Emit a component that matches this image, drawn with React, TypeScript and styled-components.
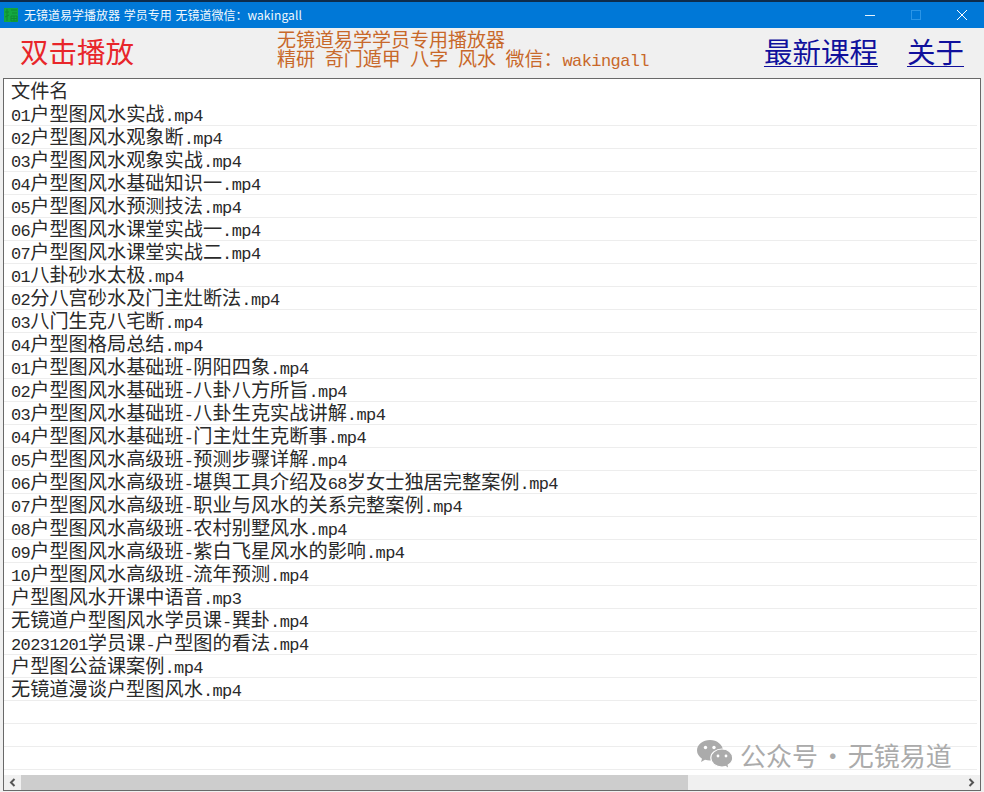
import React from "react";
import styled, { createGlobalStyle } from "styled-components";

const Global = createGlobalStyle`
  html, body { margin: 0; padding: 0; height: 792px; overflow: hidden; background: #f0f0f0; }
  #root { height: 792px; }
`;

const Win = styled.div`
  position: relative;
  width: 984px;
  height: 792px;
  display: flex;
  flex-direction: column;
  padding-bottom: 1px;
  box-sizing: border-box;
  background: #f0f0f0;
  font-family: "Liberation Mono", "Noto Sans CJK SC", monospace;
`;

const TitleBar = styled.div`
  height: 26px;
  flex: none;
  display: flex;
  align-items: center;
  background: #0078d7;
  border-top: 2px solid #0d2c4c;
  color: #f2f8fd;
  font: 12px/26px "Noto Sans CJK SC", "Noto Sans", sans-serif;
  padding-left: 4px;
`;

const AppIcon = styled.svg`
  width: 14px;
  height: 14px;
  flex: none;
  margin-right: 6px;
`;

const TitleText = styled.span`
  flex: 1;
  white-space: pre;
  word-spacing: 1px;
`;

const TitleLatin = styled.span`
  letter-spacing: 0.1px;
`;

const WinControl = styled.svg`
  width: 46px;
  height: 12px;
  flex: none;
`;

const Controls = styled.div`
  display: flex;
  margin-right: -1px;
  align-items: center;
`;

const Toolbar = styled.div`
  height: 50px;
  flex: none;
  display: flex;
  align-items: center;
  padding: 0 20px;
`;

const PlayLabel = styled.div`
  width: 257px;
  flex: none;
  font: 28.5px/34px "Noto Sans CJK SC", sans-serif;
  color: #e8262a;
  margin-top: -4px;
`;

const Slogan = styled.div`
  flex: 1;
  font: 19px/19px "Noto Sans CJK SC", sans-serif;
  color: #c8682a;
  white-space: pre;
  margin-top: -10px;
`;

const SloganLine = styled.div`
  height: 19px;
`;

const LinkBox = styled.a<{ $gap: number }>`
  font: 28.5px/34px "Noto Sans CJK SC", sans-serif;
  color: #10109c;
  text-decoration: underline;
  text-decoration-thickness: 1px;
  text-underline-offset: 3px;
  margin-left: ${(p) => p.$gap}px;
  margin-top: -5px;
  white-space: nowrap;
`;

const ListFrame = styled.div`
  flex: 1;
  min-height: 0;
  margin: 0 3px;
  display: flex;
  flex-direction: column;
  background: #fff;
  border: 1px solid #696969;
`;

const Rows = styled.div`
  flex: 1;
  min-height: 0;
`;

const HeaderRow = styled.div`
  height: 24px;
  padding-left: 7px;
  font: 19.2px/23px "Noto Sans CJK SC", sans-serif;
  color: #2a2a2a;
`;

const Row = styled.div`
  height: 23px;
  box-sizing: border-box;
  padding-left: 7px;
  margin-right: 3px;
  border-bottom: 1px solid #ededed;
  font: 19.2px/20px "Noto Sans CJK SC", sans-serif;
  color: #2a2a2a;
  white-space: nowrap;
`;

const Latin = styled.span`
  font-family: "Liberation Mono", monospace;
  font-size: 17px;
  letter-spacing: -0.6px;
`;

const HBar = styled.div`
  height: 15px;
  flex: none;
  display: flex;
  background: #f0f0f0;
`;

const ArrowBtn = styled.div`
  width: 17px;
  flex: none;
  display: flex;
  align-items: center;
  justify-content: center;
`;

const Thumb = styled.div`
  width: 667px;
  flex: none;
  background: #cdcdcd;
`;

const Track = styled.div`
  flex: 1;
`;

const Watermark = styled.div`
  position: absolute;
  left: 697px;
  top: 740px;
  display: flex;
  align-items: center;
  color: #ababab;
  font: 26px/28px "Noto Sans CJK SC", sans-serif;
  white-space: pre;
  word-spacing: -4px;
  height: 29px;
`;

const WmIcon = styled.svg`
  width: 36px;
  height: 29px;
  margin-right: 7px;
  flex: none;
`;

function Mixed({ text }: { text: string }) {
  const parts = text.split(/([\x20-\x7e]+)/).filter(Boolean);
  return (
    <>
      {parts.map((p, i) =>
        /^[\x20-\x7e]+$/.test(p) ? <Latin key={i}>{p}</Latin> : <React.Fragment key={i}>{p}</React.Fragment>
      )}
    </>
  );
}

const files = [
  "01户型图风水实战.mp4",
  "02户型图风水观象断.mp4",
  "03户型图风水观象实战.mp4",
  "04户型图风水基础知识一.mp4",
  "05户型图风水预测技法.mp4",
  "06户型图风水课堂实战一.mp4",
  "07户型图风水课堂实战二.mp4",
  "01八卦砂水太极.mp4",
  "02分八宫砂水及门主灶断法.mp4",
  "03八门生克八宅断.mp4",
  "04户型图格局总结.mp4",
  "01户型图风水基础班-阴阳四象.mp4",
  "02户型图风水基础班-八卦八方所旨.mp4",
  "03户型图风水基础班-八卦生克实战讲解.mp4",
  "04户型图风水基础班-门主灶生克断事.mp4",
  "05户型图风水高级班-预测步骤详解.mp4",
  "06户型图风水高级班-堪舆工具介绍及68岁女士独居完整案例.mp4",
  "07户型图风水高级班-职业与风水的关系完整案例.mp4",
  "08户型图风水高级班-农村别墅风水.mp4",
  "09户型图风水高级班-紫白飞星风水的影响.mp4",
  "10户型图风水高级班-流年预测.mp4",
  "户型图风水开课中语音.mp3",
  "无镜道户型图风水学员课-巽卦.mp4",
  "20231201学员课-户型图的看法.mp4",
  "户型图公益课案例.mp4",
  "无镜道漫谈户型图风水.mp4",
  "",
  "",
  "",
];

export default function App() {
  return (
    <Win>
      <Global />
      <TitleBar>
        <AppIcon viewBox="0 0 14 14">
          <rect width="14" height="14" fill="#14a83f" />
          <path d="M3 1v12M1 4h4M1 9l4-2M7 2h6M8 5h5M7 8h6v5H7zM10 8v5M7 10.5h6" stroke="#0e8a33" strokeWidth="1" fill="none" />
        </AppIcon>
        <TitleText>
          无镜道易学播放器 学员专用 无镜道微信：<TitleLatin>wakingall</TitleLatin>
        </TitleText>
        <Controls>
          <WinControl viewBox="0 0 46 12">
            <path d="M18 6.5h10" stroke="#e6f3fc" strokeWidth="1" />
          </WinControl>
          <WinControl viewBox="0 0 46 12">
            <rect x="18.5" y="1.5" width="9" height="9" fill="none" stroke="#2b95e6" strokeWidth="1" />
          </WinControl>
          <WinControl viewBox="0 0 46 12">
            <path d="M18 1l10 10M28 1L18 11" stroke="#fff" strokeWidth="1" />
          </WinControl>
        </Controls>
      </TitleBar>
      <Toolbar>
        <PlayLabel>双击播放</PlayLabel>
        <Slogan>
          <SloganLine>无镜道易学学员专用播放器</SloganLine>
          <SloganLine>
            <Mixed text="精研 奇门遁甲 八字 风水 微信：wakingall" />
          </SloganLine>
        </Slogan>
        <LinkBox $gap={0}>最新课程</LinkBox>
        <LinkBox $gap={29}>关于</LinkBox>
      </Toolbar>
      <ListFrame>
        <Rows>
          <HeaderRow>文件名</HeaderRow>
          {files.map((f, i) => (
            <Row key={i}>
              <Mixed text={f} />
            </Row>
          ))}
        </Rows>
        <HBar>
          <ArrowBtn>
            <svg width="7" height="9" viewBox="0 0 7 9">
              <path d="M5.5 1L2 4.5 5.5 8" fill="none" stroke="#555" strokeWidth="2" />
            </svg>
          </ArrowBtn>
          <Thumb />
          <Track />
          <ArrowBtn>
            <svg width="7" height="9" viewBox="0 0 7 9">
              <path d="M1.5 1L5 4.5 1.5 8" fill="none" stroke="#555" strokeWidth="2" />
            </svg>
          </ArrowBtn>
        </HBar>
      </ListFrame>
      <Watermark>
        <WmIcon viewBox="0 0 36 29">
          <path d="M13 0C6 0 0 4.600 0 10.500c0 3.400 2 6.200 5 8.200L4 22l4-2.200c1.700.5 3.300.8 5 .8 7 0 13-4.600 13-10.100S20 0 13 0z" fill="#ababab" />
          <circle cx="8.500" cy="7.500" r="1.700" fill="#fff" />
          <circle cx="17" cy="7.500" r="1.700" fill="#fff" />
          <path d="M25 9c-6.200 0-11.200 4-11.200 9s5 9 11.200 9c1.200 0 2.400-.2 3.500-.5L32 29l-.8-4c2.800-1.700 4.500-4.200 4.500-7 0-5-4.900-9-10.700-9z" fill="#ababab" stroke="#fff" strokeWidth="1.200" />
          <circle cx="21" cy="16" r="1.400" fill="#fff" />
          <circle cx="29" cy="16" r="1.400" fill="#fff" />
        </WmIcon>
        公众号 · 无镜易道
      </Watermark>
    </Win>
  );
}
